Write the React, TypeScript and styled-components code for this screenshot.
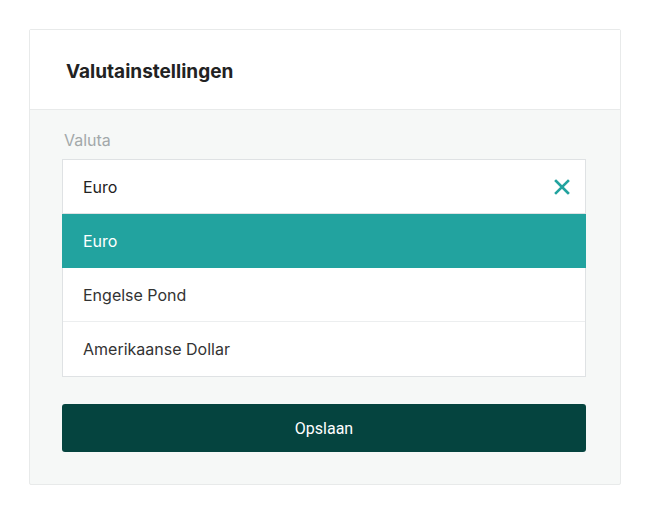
import React from "react";
import styled, { createGlobalStyle } from "styled-components";

const Global = createGlobalStyle`
  html, body { margin: 0; padding: 0; background: #ffffff; }
  body { font-family: Inter, "Noto Sans", sans-serif; color: #222; }
`;

const Page = styled.div`
  padding: 29px 29px;
`;

const Card = styled.div`
  width: 590px;
  border: 1px solid #e8eaea;
  border-radius: 2px;
  background: #f6f8f7;
`;

const Header = styled.div`
  box-sizing: border-box;
  height: 80px;
  background: #ffffff;
  border-bottom: 1px solid #e8eaea;
  display: flex;
  align-items: center;
  padding: 4px 36px 0;
`;

const Title = styled.h2`
  margin: 0;
  font-size: 19px;
  font-weight: 700;
  color: #222;
`;

const Body = styled.div`
  padding: 20px 34px 32px 32px;
  display: flex;
  flex-direction: column;
`;

const Label = styled.label`
  font-size: 16px;
  color: #a3a8aa;
  line-height: 20px;
  padding-left: 2px;
  margin-bottom: 9px;
`;

const Select = styled.div`
  display: flex;
  flex-direction: column;
`;

const Control = styled.div`
  height: 53px;
  background: #fff;
  border: 1px solid #dfe2e4;
  display: flex;
  align-items: center;
  justify-content: space-between;
  padding: 0 15px 0 20px;
  font-size: 16px;
  color: #222;
`;

const ClearButton = styled.button`
  border: 0;
  background: transparent;
  padding: 0;
  display: flex;
  cursor: pointer;
`;

const Menu = styled.ul`
  list-style: none;
  margin: 0;
  padding: 0;
  background: #fff;
  border: 1px solid #dfe2e4;
  border-top: 0;
`;

const Option = styled.li<{ $active?: boolean }>`
  height: 53px;
  display: flex;
  align-items: center;
  font-size: 16px;
  color: ${(p) => (p.$active ? "#ffffff" : "#333")};
  background: ${(p) => (p.$active ? "#22a39f" : "#ffffff")};
  margin: ${(p) => (p.$active ? "0 -1px" : "0")};
  padding-left: ${(p) => (p.$active ? "21px" : "20px")};
  border-bottom: 1px solid ${(p) => (p.$active ? "#22a39f" : "#eceeef")};
  &:last-child { border-bottom: 0; height: 54px; }
`;

const SaveButton = styled.button`
  margin-top: 27px;
  height: 48px;
  border: 0;
  border-radius: 3px;
  background: #05443f;
  color: #fff;
  font-family: Roboto, Inter, sans-serif;
  font-size: 16px;
  cursor: pointer;
`;

const options = ["Euro", "Engelse Pond", "Amerikaanse Dollar"];

export default function App() {
  return (
    <Page>
      <Global />
      <Card>
        <Header>
          <Title>Valutainstellingen</Title>
        </Header>
        <Body>
          <Label>Valuta</Label>
          <Select>
            <Control>
              <span>Euro</span>
              <ClearButton aria-label="Wissen">
                <svg width="16" height="16" viewBox="0 0 16 16">
                  <path d="M2 2 L14 14 M14 2 L2 14" stroke="#22a39f" strokeWidth="2.6" strokeLinecap="square" />
                </svg>
              </ClearButton>
            </Control>
            <Menu>
              {options.map((o, i) => (
                <Option key={o} $active={i === 0}>
                  {o}
                </Option>
              ))}
            </Menu>
          </Select>
          <SaveButton>Opslaan</SaveButton>
        </Body>
      </Card>
    </Page>
  );
}
